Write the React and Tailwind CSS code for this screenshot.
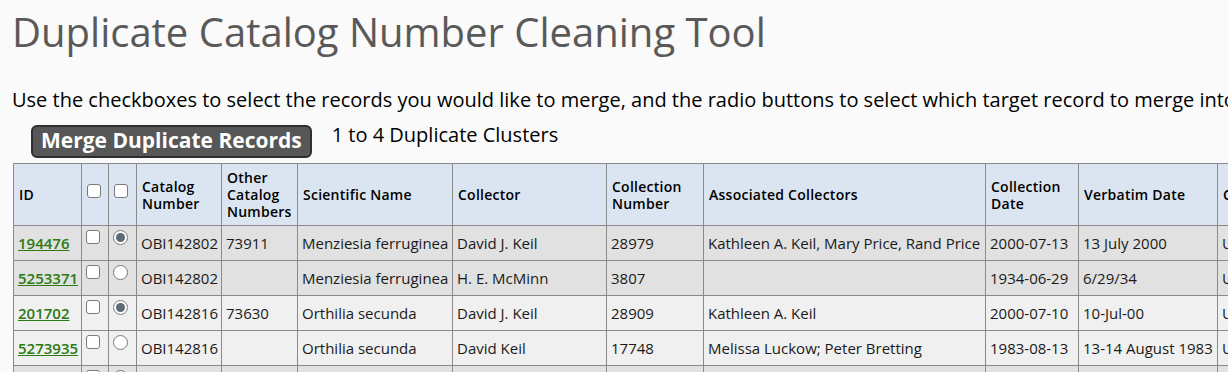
import React from 'react';

const rows = [
  { id: '194476', target: true, cat: 'OBI142802', other: '73911', sci: 'Menziesia ferruginea', collector: 'David J. Keil', num: '28979', assoc: 'Kathleen A. Keil, Mary Price, Rand Price', date: '2000-07-13', verbatim: '13 July 2000', country: 'USA', shade: true },
  { id: '5253371', target: false, cat: 'OBI142802', other: '', sci: 'Menziesia ferruginea', collector: 'H. E. McMinn', num: '3807', assoc: '', date: '1934-06-29', verbatim: '6/29/34', country: 'USA', shade: true },
  { id: '201702', target: true, cat: 'OBI142816', other: '73630', sci: 'Orthilia secunda', collector: 'David J. Keil', num: '28909', assoc: 'Kathleen A. Keil', date: '2000-07-10', verbatim: '10-Jul-00', country: 'USA', shade: false },
  { id: '5273935', target: false, cat: 'OBI142816', other: '', sci: 'Orthilia secunda', collector: 'David Keil', num: '17748', assoc: 'Melissa Luckow; Peter Bretting', date: '1983-08-13', verbatim: '13-14 August 1983', country: 'USA', shade: false },
  { id: '188012', target: true, cat: 'OBI142830', other: '71204', sci: 'Vaccinium membranaceum', collector: 'David J. Keil', num: '27815', assoc: 'Kathleen A. Keil', date: '1999-08-02', verbatim: '2 Aug 1999', country: 'USA', shade: true },
];

const widths = [68, 27, 28, 85, 76, 155, 154, 97, 282, 93, 139, 100];

const Checkbox = () => (
  <span className="block w-[14px] h-[14px] rounded-[3px] border border-[#7a7a7a] bg-white" />
);

const Radio = ({ checked }) => (
  <span className="flex items-center justify-center w-[15px] h-[15px] rounded-full border border-[#7a7a7a] bg-white">
    {checked && <span className="block w-[9px] h-[9px] rounded-full bg-[#5e6a74]" />}
  </span>
);

const th = 'border border-[#8a8a8a] px-[5px] py-[5px] text-left align-middle font-semibold text-[14px] leading-[17px] tracking-[0.25px] text-black';
const td = 'border border-[#8a8a8a] px-[4px] h-[35px] align-middle text-[15px] leading-[20px] text-[#1a1a1a] whitespace-nowrap overflow-hidden';
const tdBox = 'border border-[#8a8a8a] pl-[4px] pt-[4px] h-[35px] align-top';

export default function App() {
  return (
    <div className="w-[1228px] h-[372px] overflow-hidden bg-[#fafafa] font-['Open_Sans','Noto_Sans',sans-serif]">
      <div className="pl-[12px] pt-[8px]">
        <h1 className="text-[40px] leading-[48px] font-normal text-[#595959] whitespace-nowrap">
          Duplicate Catalog Number Cleaning Tool
        </h1>
        <p className="mt-[31px] text-[20px] leading-[26px] text-black whitespace-nowrap">
          Use the checkboxes to select the records you would like to merge, and the radio buttons to select which target record to merge into.
        </p>
        <div className="mt-[12px] flex items-start">
          <button className="ml-[19px] border-2 border-[#2f2f2f] bg-[#575757] rounded-[6px] px-[8px] pt-[1px] pb-[4px] text-[21px] leading-[24px] font-bold text-white whitespace-nowrap">
            Merge Duplicate Records
          </button>
          <span className="ml-[20px] -mt-[2px] text-[20px] leading-[24px] text-black whitespace-nowrap">1 to 4 Duplicate Clusters</span>
        </div>
        <table className="mt-[5px] ml-[1px] table-fixed border-collapse w-[1304px]">
          <colgroup>
            {widths.map((w, i) => (
              <col key={i} style={{ width: w }} />
            ))}
          </colgroup>
          <thead>
            <tr className="bg-[#dbe5f1]">
              <th className={th}>ID</th>
              <th className={th}><span className="block mb-[7px]"><Checkbox /></span></th>
              <th className={th}><span className="block mb-[7px]"><Checkbox /></span></th>
              <th className={th}>Catalog Number</th>
              <th className={th}>Other Catalog Numbers</th>
              <th className={th}>Scientific Name</th>
              <th className={th}>Collector</th>
              <th className={th}>Collection Number</th>
              <th className={th}>Associated Collectors</th>
              <th className={th}>Collection Date</th>
              <th className={th}>Verbatim Date</th>
              <th className={th}>Country</th>
            </tr>
          </thead>
          <tbody>
            {rows.map((r) => (
              <tr key={r.id} className={r.shade ? 'bg-[#e1e1e1]' : 'bg-[#f0f0f0]'}>
                <td className={td}>
                  <a href="#" className="font-semibold text-[#2a7a10] underline">{r.id}</a>
                </td>
                <td className={tdBox}><Checkbox /></td>
                <td className={tdBox}><Radio checked={r.target} /></td>
                <td className={td}>{r.cat}</td>
                <td className={td}>{r.other}</td>
                <td className={td}>{r.sci}</td>
                <td className={td}>{r.collector}</td>
                <td className={td}>{r.num}</td>
                <td className={td}>{r.assoc}</td>
                <td className={td}>{r.date}</td>
                <td className={td}>{r.verbatim}</td>
                <td className={td}>{r.country}</td>
              </tr>
            ))}
          </tbody>
        </table>
      </div>
    </div>
  );
}
